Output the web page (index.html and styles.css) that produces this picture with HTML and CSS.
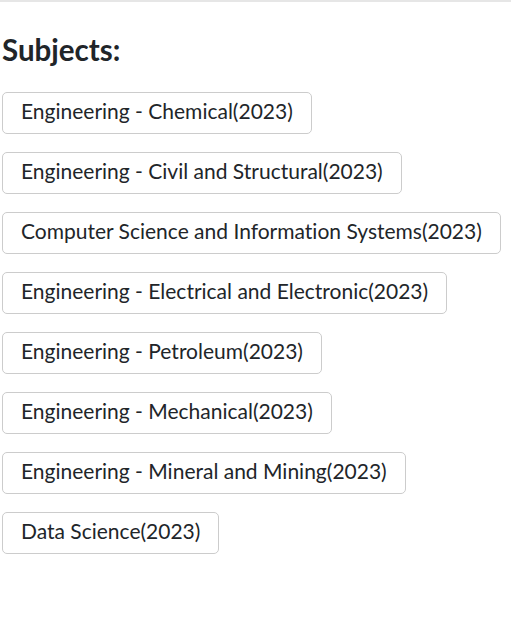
FILE: index.html
```html
<!DOCTYPE html>
<html>
  <head>
    <meta charset="utf-8" />
    <title>Subjects</title>
    <link rel="stylesheet" href="styles.css">
  </head>
  <body>
    <div class="topline"></div>
    <div class="container">
      <h2 class="title">Subjects:</h2>
      <div class="subjects">
        <button class="subject">Engineering - Chemical(2023)</button>
        <button class="subject">Engineering - Civil and Structural(2023)</button>
        <button class="subject">Computer Science and Information Systems(2023)</button>
        <button class="subject">Engineering - Electrical and Electronic(2023)</button>
        <button class="subject">Engineering - Petroleum(2023)</button>
        <button class="subject">Engineering - Mechanical(2023)</button>
        <button class="subject">Engineering - Mineral and Mining(2023)</button>
        <button class="subject">Data Science(2023)</button>
      </div>
    </div>
  </body>
</html>
```
FILE: styles.css
```css
body {
  margin: 0;
  padding: 0;
  background-color: #ffffff;
  font-family: Lato, "Open Sans", sans-serif;
  font-variant-ligatures: none;
  color: #212529;
}
.topline {
  height: 2px;
  background-color: #e6e6e6;
}
.container {
  padding: 0 2px;
}
.title {
  font-size: 29.5px;
  font-weight: bold;
  margin: 28px 0 22px 0;
  line-height: 40px;
  color: #212529;
}
.subjects {
  display: flex;
  flex-direction: column;
  align-items: flex-start;
  gap: 18px;
}
.subject {
  font-family: Lato, "Open Sans", sans-serif;
  font-variant-ligatures: none;
  font-size: 21px;
  line-height: 30px;
  padding: 3px 18px 7px 18px;
  border: 1px solid #cccccc;
  border-radius: 5px;
  background-color: #ffffff;
  color: #212529;
  cursor: pointer;
}
```
